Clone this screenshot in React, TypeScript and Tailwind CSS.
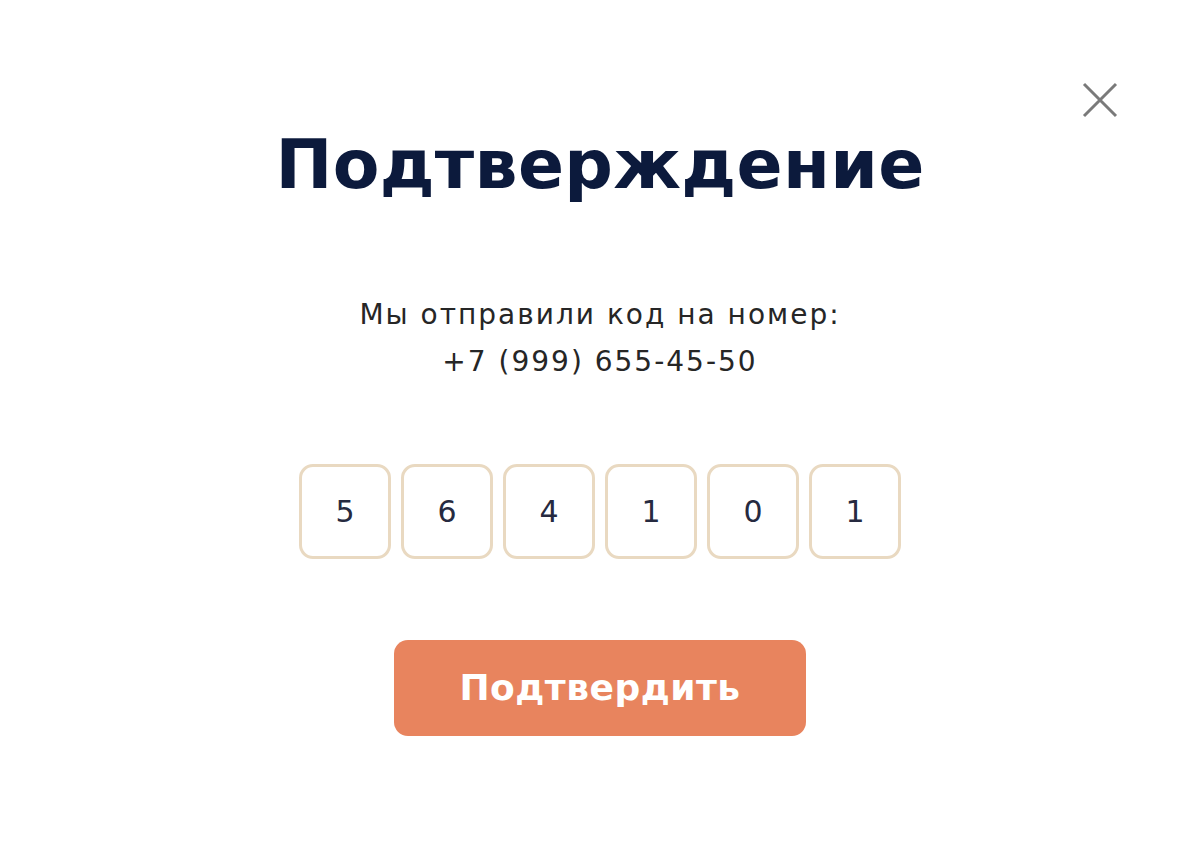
import { useState } from "react";

const font = { fontFamily: '"DejaVu Sans", "Noto Sans", sans-serif' };

function CloseIcon() {
  return (
    <svg width="36" height="36" viewBox="0 0 36 36" fill="none" stroke="#7a7a7a" strokeWidth={3}>
      <path d="M2 2 L34 34 M34 2 L2 34" />
    </svg>
  );
}

export default function App() {
  const [code] = useState(["5", "6", "4", "1", "0", "1"]);

  return (
    <div className="w-[1200px] h-[856px] bg-white relative flex flex-col items-center" style={font}>
      <button className="absolute left-[1082px] top-[82px]">
        <CloseIcon />
      </button>

      <h1 className="mt-[122px] text-[68px] leading-[86px] font-bold text-[#0c1a3c] tracking-[0.3px]">
        Подтверждение
      </h1>

      <p className="mt-[83px] text-center text-[28px] leading-[47px] text-[#262626] tracking-[2px]">
        Мы отправили код на номер:
        <br />
        +7 (999) 655-45-50
      </p>

      <div className="mt-[79px] flex gap-[10px]">
        {code.map((d, i) => (
          <div
            key={i}
            className="w-[92px] h-[95px] rounded-[14px] border-[3px] border-[#e9d9c1] flex items-center justify-center text-[30px] text-[#262a40]"
          >
            {d}
          </div>
        ))}
      </div>

      <button className="mt-[81px] w-[412px] h-[96px] rounded-[14px] bg-[#e8845e] text-white text-[36px] font-semibold tracking-[0.5px]">
        Подтвердить
      </button>
    </div>
  );
}
